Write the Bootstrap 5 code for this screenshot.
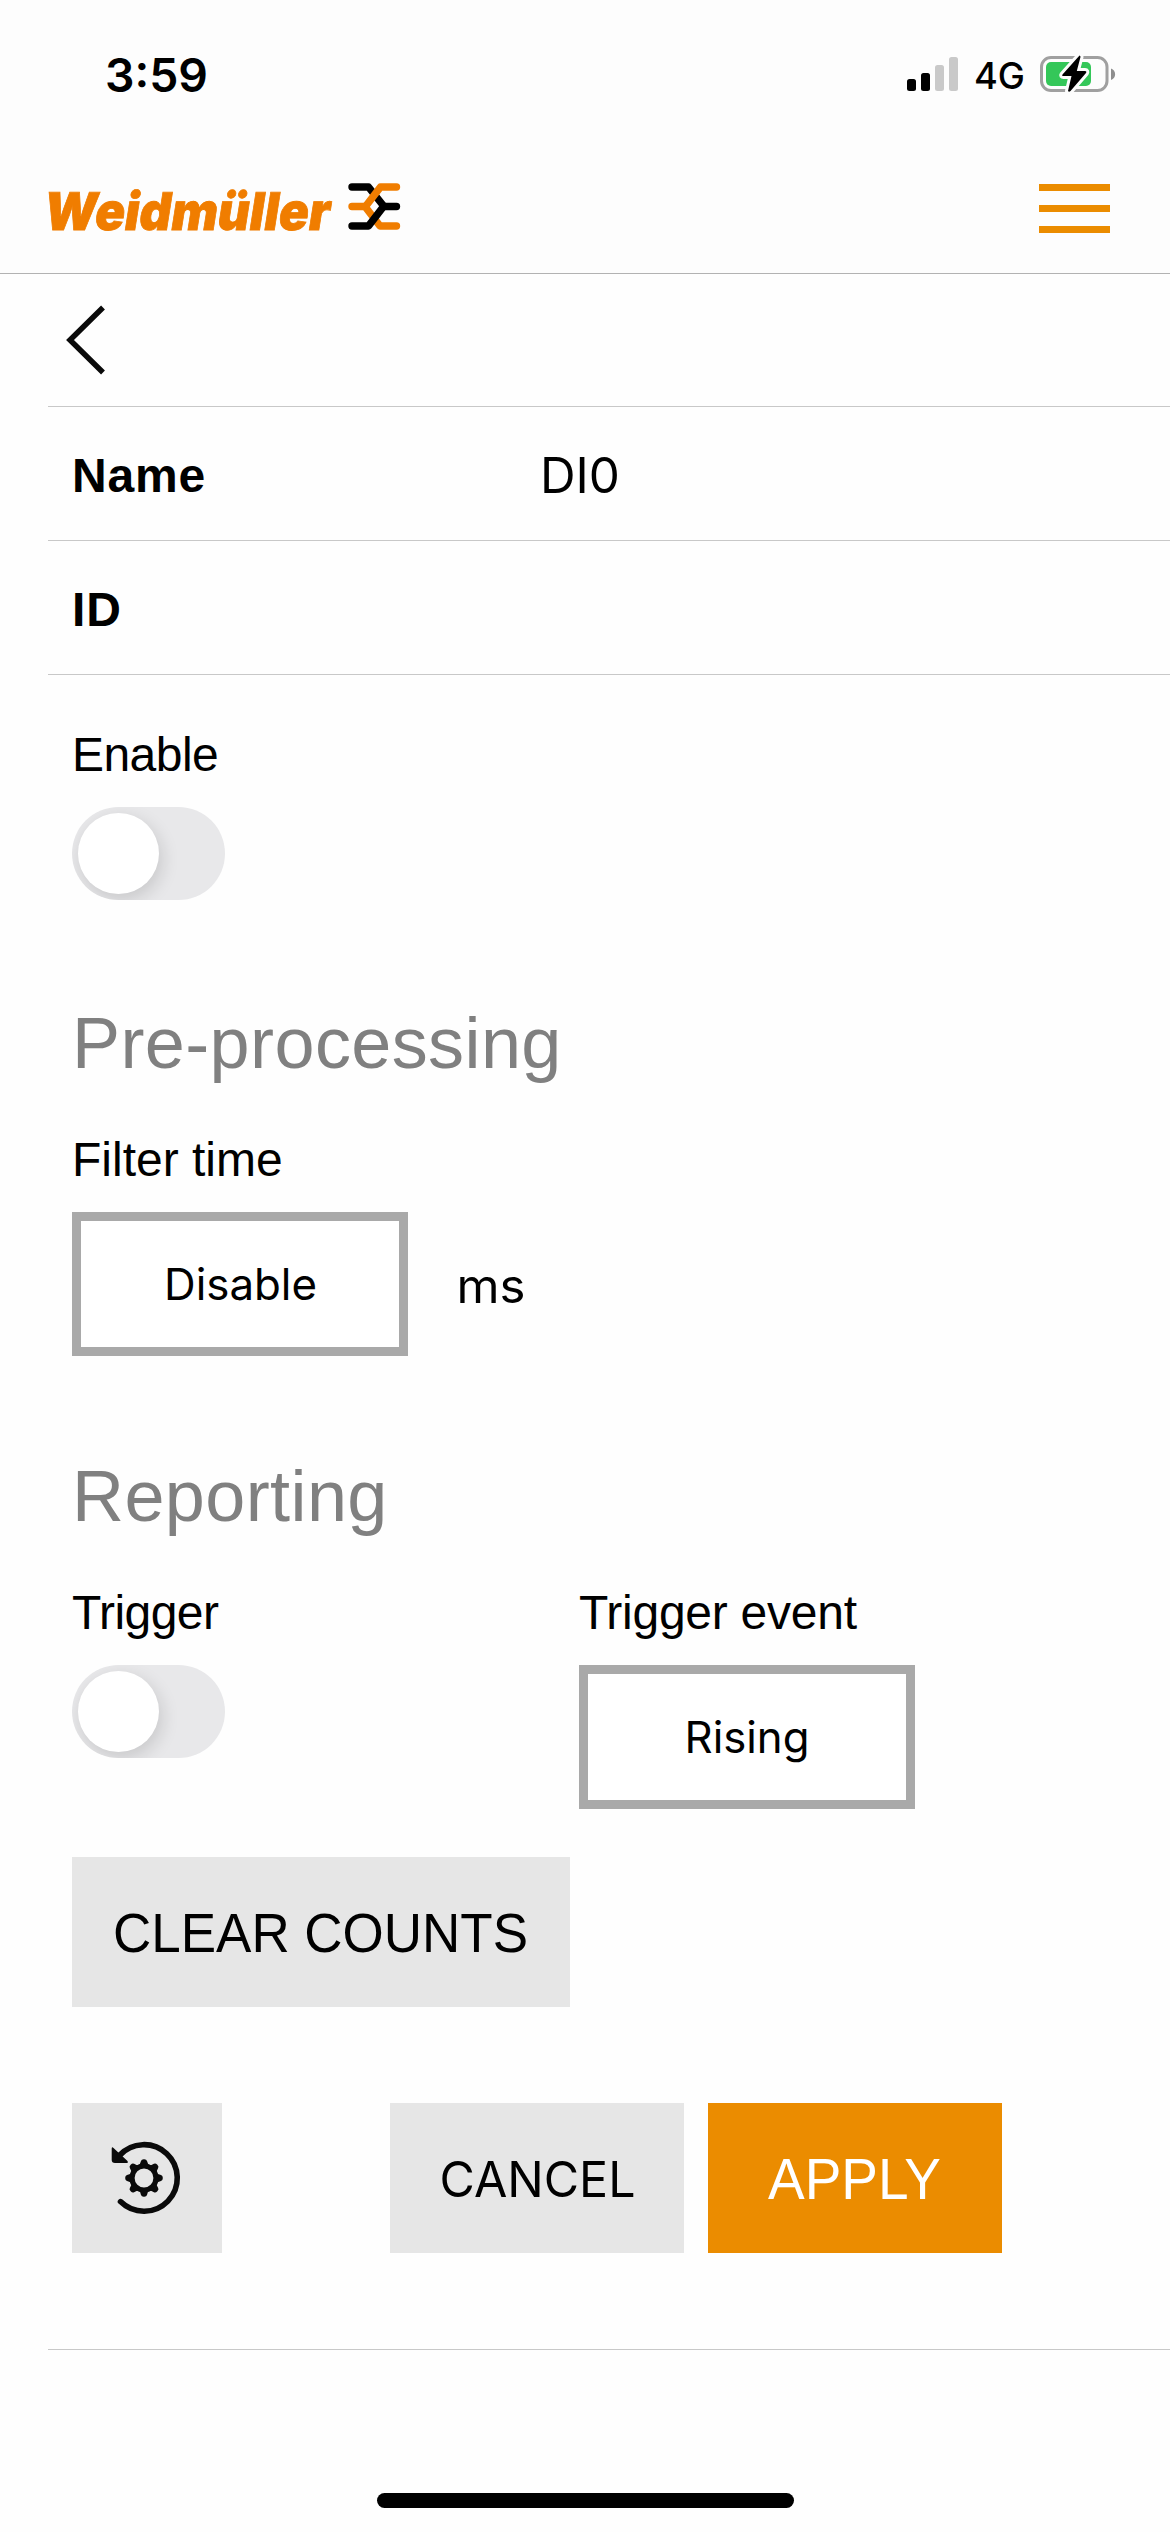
<!DOCTYPE html>
<html lang="en">
<head>
<meta charset="utf-8">
<meta name="viewport" content="width=device-width, initial-scale=1">
<title>DI0</title>
<link href="https://cdn.jsdelivr.net/npm/bootstrap@5.3.0/dist/css/bootstrap.min.css" rel="stylesheet">
<style>
  body { width: 1170px; height: 2532px; background: #fefefe; color: #000; font-family: "Liberation Sans", Arial, sans-serif; font-size: 48px; line-height: 58px; overflow: hidden; }
  svg { display: block; flex: none; overflow: visible; }
  svg text { white-space: pre; }
  .app-head { height: 274px; background: #fdfdfd; border-bottom: 1px solid #b2b2b2; }
  .status-bar { height: 150px; padding: 0 54px 0 105px; }
  .brand-bar { height: 123px; padding: 0 60px 0 28px; }
  .menu-btn { width: 71px; height: 49px; border: 0; margin-top: 34px; }
  .menu-btn span { height: 7px; background: #eb8c00; }
  .brand-logo { margin-top: 12px; }
  .list-area { margin-left: 48px; }
  .line-row { border-bottom: 1px solid #c8c8c8; padding-left: 24px; }
  .back-row { height: 133px; padding-left: 18px; }
  .info-row { height: 134px; }
  .info-label { width: 468px; padding-top: 5px; letter-spacing: .8px; }
  .form-area { height: 1675px; padding-top: 51px; }
  .field-label { letter-spacing: -.55px; }
  .event-label { letter-spacing: -.25px; }
  .switch-track { width: 153px; height: 93px; margin-top: 23px; padding: 6px; border-radius: 47px; background: #e8e8ea; overflow: hidden; }
  .switch-knob { width: 81px; height: 81px; border-radius: 50%; background: #fff; box-shadow: 3px 6px 18px rgba(0,0,0,.14); }
  .section-title { font-size: 72px; line-height: 86px; color: #808080; margin: 100px 0 45px; font-weight: 400; letter-spacing: .4px; }
  .report-title { margin-top: 97px; }
  .picker { width: 336px; height: 144px; margin-top: 23px; border: 9px solid #a9a9a9; background: #fff; }
  .unit-text { margin: 23px 0 0 48px; }
  .flat-btn { height: 150px; border: 0; border-radius: 0; padding: 0; background: #e6e6e6; }
  .clear-btn { width: 498px; margin-top: 48px; }
  .action-row { margin-top: 96px; }
  .reset-btn { width: 150px; margin-right: 168px; }
  .wide-btn { width: 294px; }
  .cancel-btn { margin-right: 24px; }
  .apply-btn { background: #eb8c00; }
  .trigger-col { width: 507px; }
  .home-bar { width: 417px; height: 15px; border-radius: 8px; background: #000; margin: 143px 0 0 377px; }
</style>
</head>
<body>
<header class="app-head">
  <div class="status-bar d-flex align-items-center justify-content-between">
    <svg width="110" height="60" viewBox="105 44 110 60" role="img" aria-label="Time">
      <text x="105" y="90.500" font-family="Inter, sans-serif" font-weight="600" font-size="46" textLength="103" lengthAdjust="spacingAndGlyphs">3:59</text>
    </svg>
    <svg width="210" height="50" viewBox="906 50 210 50" role="img" aria-label="Signal and battery">
      <g>
        <rect x="907" y="79" width="9" height="12" rx="2.5"/>
        <rect x="921" y="73" width="9" height="18" rx="2.5"/>
        <rect x="935" y="65" width="9" height="26" rx="2.5" fill="#c9c9c9"/>
        <rect x="949" y="57" width="9" height="34" rx="2.5" fill="#c9c9c9"/>
      </g>
      <text x="974" y="89.3" font-family="Inter, sans-serif" font-weight="500" font-size="36.5" textLength="51" lengthAdjust="spacingAndGlyphs">4G</text>
      <rect x="1041.5" y="57.500" width="65.500" height="33" rx="9.500" fill="none" stroke="#a0a0a0" stroke-width="3"/>
      <path d="M1111 68.500c5.500 2 5.500 9.500 0 11.500z" fill="#8e8e8e"/>
      <rect x="1046" y="62" width="45" height="24" rx="5" fill="#34c759"/>
      <path d="M1079.500 55.500 L1062.500 74.500 Q1061.500 76 1063.500 76 H1071.500 L1068 91 Q1069 92.500 1070.500 91 L1086 73 Q1087 71 1085 71 H1076.800 L1080.500 57 Q1080.500 55.500 1079.500 55.500Z" stroke="#fdfdfd" stroke-width="6" stroke-linejoin="round" paint-order="stroke"/>
    </svg>
  </div>
  <div class="brand-bar d-flex justify-content-between">
    <svg class="brand-logo" width="390" height="90" viewBox="28 162 390 90" role="img" aria-label="Weidmüller">
      <text transform="translate(42 229.700) skewX(-9)" font-family="Inter, sans-serif" font-weight="900" font-size="52" fill="#f07d00" stroke="#f07d00" stroke-width=".8" textLength="286" lengthAdjust="spacingAndGlyphs">Weidmüller</text>
      <g fill="none" stroke-width="7.400" stroke-linecap="round" stroke-linejoin="round">
        <path d="M352 206.500H365L380 226H396.500" stroke="#f07d00"/>
        <path d="M352 187H368.500L384 206.500" stroke="#000"/>
        <path d="M396.500 187H380.500L365.500 206.500" stroke="#f07d00"/>
        <path d="M396.500 206.500H383.500L368.500 226H352" stroke="#000"/>
      </g>
    </svg>
    <button class="menu-btn bg-transparent p-0 d-flex flex-column justify-content-between" aria-label="Menu"><span class="w-100"></span><span class="w-100"></span><span class="w-100"></span></button>
  </div>
</header>
<main class="list-area">
  <div class="line-row back-row d-flex align-items-center">
    <svg width="42" height="70" viewBox="66 306 42 70"><path d="M103 308.500 70 341l33 32.500" fill="none" stroke="#0a0a0a" stroke-width="5.500"/></svg>
  </div>
  <div class="line-row info-row d-flex align-items-center">
    <div class="info-label fw-bold">Name</div>
    <svg width="90" height="60" viewBox="540 444 90 60"><text x="540" y="492.700" font-family="Inter, sans-serif" font-weight="400" font-size="49" textLength="80" lengthAdjust="spacingAndGlyphs">DI0</text></svg>
  </div>
  <div class="line-row info-row d-flex align-items-center">
    <div class="info-label fw-bold">ID</div>
  </div>
  <form class="line-row form-area" onsubmit="return false">
    <div class="field-label">Enable</div>
    <div class="switch-track" role="switch" aria-checked="false"><div class="switch-knob"></div></div>

    <h2 class="section-title">Pre-processing</h2>
    <div>Filter time</div>
    <div class="d-flex align-items-center">
      <div class="picker d-flex align-items-center justify-content-center">
        <svg width="160" height="60" viewBox="160 1254 160 60"><text x="164" y="1300.300" font-family="Inter, sans-serif" font-size="43.500" textLength="153" lengthAdjust="spacingAndGlyphs">Disable</text></svg>
      </div>
      <svg class="unit-text" width="80" height="60" viewBox="456 1254 80 60"><text x="456.500" y="1302.700" font-family="Inter, sans-serif" font-size="47" textLength="69" lengthAdjust="spacingAndGlyphs">ms</text></svg>
    </div>

    <h2 class="section-title report-title">Reporting</h2>
    <div class="d-flex">
      <div class="trigger-col">
        <div class="field-label">Trigger</div>
        <div class="switch-track" role="switch" aria-checked="false"><div class="switch-knob"></div></div>
      </div>
      <div>
        <div class="event-label">Trigger event</div>
        <div class="picker d-flex align-items-center justify-content-center">
          <svg width="130" height="60" viewBox="682 1707 130 60"><text x="684.500" y="1752.700" font-family="Inter, sans-serif" font-size="43.500" textLength="125" lengthAdjust="spacingAndGlyphs">Rising</text></svg>
        </div>
      </div>
    </div>
    <button class="flat-btn clear-btn btn d-flex align-items-center justify-content-center">
      <svg width="470" height="100" viewBox="86 1882 470 100"><text x="113" y="1952" font-family="Liberation Sans" font-size="56" textLength="415" lengthAdjust="spacingAndGlyphs">CLEAR COUNTS</text></svg>
    </button>
    <div class="action-row d-flex">
      <button class="flat-btn reset-btn btn d-flex align-items-center justify-content-center" aria-label="Reset">
        <svg width="80" height="80" viewBox="-37 -40 80 80">
          <path d="M-24.600 -22.500A33.300 33.300 0 1 1 -23.500 23.600" fill="none" stroke="#0a0a0a" stroke-width="5.600" stroke-linecap="round"/>
          <path d="M-32.300 -29.500Q-32 -31.500-30.500 -30L-16.500 -17Q-15.500 -15-17.500 -15H-29Q-32.300 -15-32.300 -18Z" fill="#0a0a0a"/>
          <circle r="12" fill="none" stroke="#0a0a0a" stroke-width="5.200"/>
          <g fill="#0a0a0a">
            <path id="t" d="M-6.500 -11.500Q-3.800 -13-3 -17Q-2.500 -18.800-.3 -18.800H.3Q2.500 -18.800 3 -17Q3.800 -13 6.500 -11.500Z"/>
            <use href="#t" transform="rotate(45)"/><use href="#t" transform="rotate(90)"/><use href="#t" transform="rotate(135)"/><use href="#t" transform="rotate(180)"/><use href="#t" transform="rotate(225)"/><use href="#t" transform="rotate(270)"/><use href="#t" transform="rotate(315)"/>
          </g>
        </svg>
      </button>
      <button class="flat-btn wide-btn cancel-btn btn d-flex align-items-center justify-content-center">
        <svg width="200" height="60" viewBox="437 2148 200 60"><text x="439.500" y="2197" font-family="Inter, sans-serif" font-size="49" textLength="196" lengthAdjust="spacingAndGlyphs">CANCEL</text></svg>
      </button>
      <button class="flat-btn wide-btn apply-btn btn d-flex align-items-center justify-content-center">
        <svg width="190" height="70" viewBox="760 2143 190 70"><text x="768" y="2199" fill="#fff" font-family="Liberation Sans" font-size="58" textLength="173" lengthAdjust="spacingAndGlyphs">APPLY</text></svg>
      </button>
    </div>
  </form>
</main>
<div class="home-bar"></div>
<script src="https://cdn.jsdelivr.net/npm/bootstrap@5.3.0/dist/js/bootstrap.bundle.min.js"></script>
</body>
</html>
